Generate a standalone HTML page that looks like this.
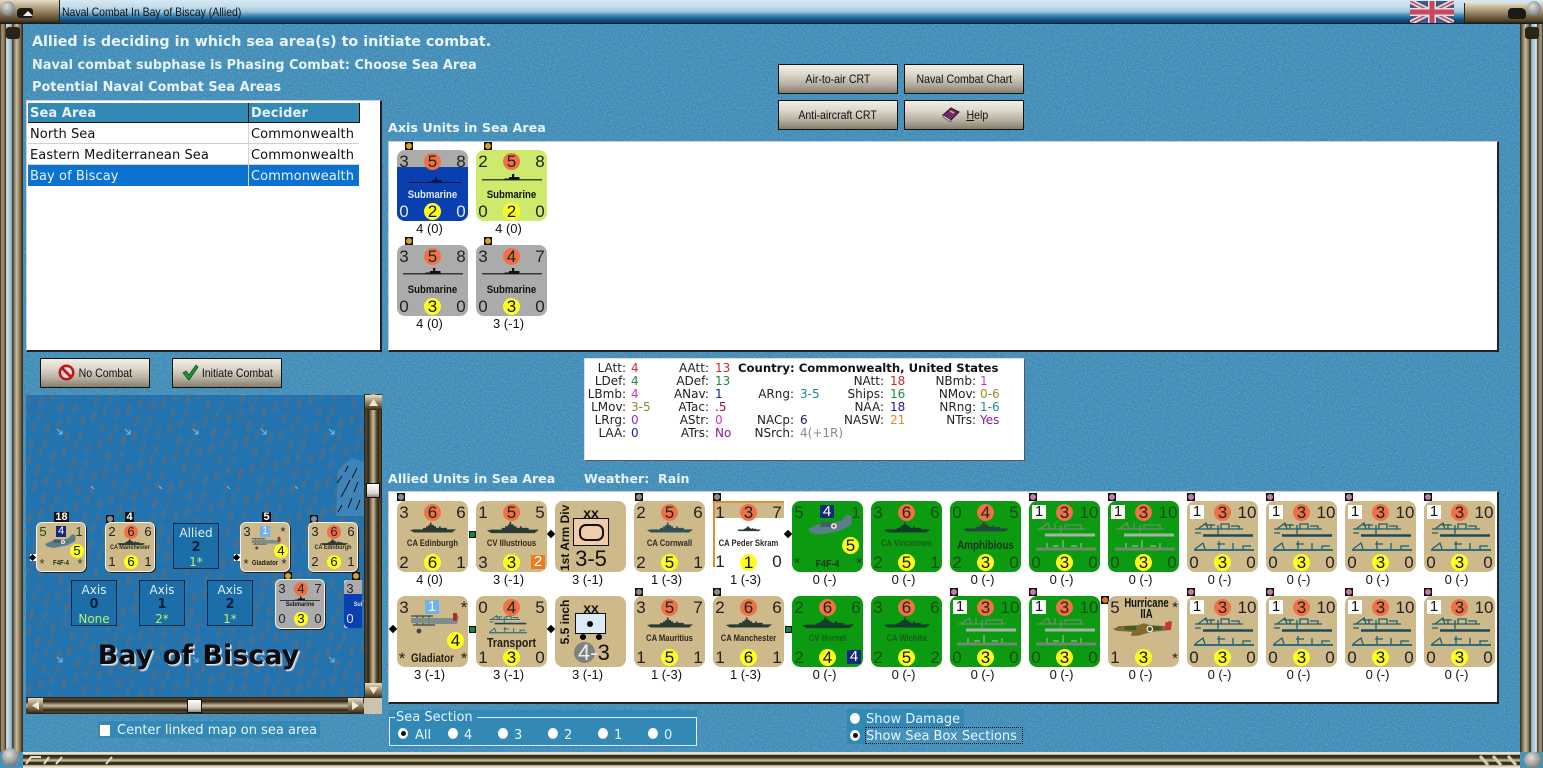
<!DOCTYPE html>
<html><head><meta charset="utf-8"><title>Naval Combat</title>
<style>
html,body{margin:0;padding:0;width:1543px;height:768px;overflow:hidden;background:#3b8ab6;font-family:"Liberation Sans",sans-serif}
#r{position:relative;width:1543px;height:768px;overflow:hidden}
#r div,#r span,#r svg,#r b{position:absolute}
.h{font:bold 13px "DejaVu Sans",sans-serif;color:#e9f3f8;white-space:nowrap}
.v{font:13px "DejaVu Sans",sans-serif;white-space:nowrap;letter-spacing:.08px}
.btn{background:linear-gradient(#f2eee6 0,#dcd6ca 35%,#b5ae9f 70%,#857d6d 100%);border:1px solid #111;box-sizing:border-box;color:#111;text-align:center;font:12px/28px "Liberation Sans",sans-serif;height:30px}
.btn span{position:static!important;display:inline-block;transform:scaleX(.88);white-space:nowrap}
.c{width:71px;height:71px;border-radius:8px;background:#cdb98a;overflow:hidden}
.gr{background:#0b9a10}.gy{background:#ababab}.lg{background:#cdea6c}
.n{width:16px;height:17px;text-align:center;font:17px/17px "Liberation Sans",sans-serif;color:#222}
.gr .n{color:#174d17}
.a{left:-1px;top:3px}.b{left:27px;top:3px;background:#ee7246;border-radius:50%;width:17px;color:#222!important}
.d{left:56px;top:3px}.t{left:50px;width:20px;top:3px}
.e{left:-1px;top:53px}.f{left:27px;top:53px;background:#ffff1e;border-radius:50%;width:17px;color:#111!important}.g{left:56px;top:53px}
.w{background:#fff;left:3px;top:4px;width:14px;height:14px;color:#111!important;font-size:15px;line-height:14px}
.nm{left:0;width:71px;top:36px;text-align:center;font:bold 9px/12px "Liberation Sans",sans-serif;color:#2d2a1e;transform:scaleX(.85);white-space:nowrap}
.gr .nm{color:#195c1a}
.sb{left:0;width:71px;top:39px;text-align:center;font:bold 11px/13px "Liberation Sans",sans-serif;color:#111;transform:scaleX(.87)}
.l{width:71px;margin-left:-3px;text-align:center;font:13px/14px "Liberation Sans",sans-serif;color:#111}
.mk{width:8px;height:8px;background:#111}
.mk i{position:absolute;left:1px;top:1px;width:6px;height:6px;border-radius:50%;background:#8a8a8a}
.pu i{background:#c07aa8}.or i{background:#dc9c30}.br i{background:#d27a2a}
.dm{width:6px;height:6px;background:#000;transform:rotate(45deg)}
.gs{width:7px;height:7px;background:#111}.gs i{position:absolute;left:1px;top:1px;width:5px;height:5px;background:#0d8a3a;border-radius:1px}
.ship{left:13px;top:20px;width:46px;height:13px;fill:#2a3a34}
.gr .ship{fill:#123d2a}
.sub{left:6px;top:20px;width:60px;height:12px;fill:#111}
.tr{left:6px;top:21px;width:62px;height:30px}
.m{width:48px;height:48px;border-radius:5px;background:#cdb98a;overflow:hidden;box-shadow:0 0 0 1px #f4f1e6,1px 1px 0 1px #222}
.m .n{font-size:13px;line-height:14px;height:14px;width:12px}
.m .a{left:0;top:2px}.m .b{left:18px;top:2px;width:14px}.m .d{left:36px;top:2px}
.m .e{left:0;top:32px}.m .f{left:18px;top:32px;width:14px}.m .g{left:36px;top:32px}
.m .nm{width:48px;font-size:6.5px;top:21px;line-height:8px}
.bx{width:46px;height:46px;background:#1b6ea8;border:1px solid #0a2a48;box-sizing:border-box;text-align:center;color:#dfeef6}
.bx b{left:0;width:44px;font:bold 13px/14px "DejaVu Sans",sans-serif;color:#0b1f3e;top:17px}
.bx span{left:0;width:44px;font:12px/14px "DejaVu Sans",sans-serif}
.s1{top:2px}.s2{top:31px;color:#b8f06a}
.rd{width:10px;height:11px;border-radius:50%;background:radial-gradient(circle at 45% 45%,#fff 0,#fff 55%,#c9ccd0 80%,#5c6c78 100%)}
.rd i{position:absolute;left:3px;top:3px;width:5px;height:5px;border-radius:50%;background:#111}
.tx{font:13px "DejaVu Sans",sans-serif;color:#eaf4f9;white-space:nowrap}
.brs{background:linear-gradient(#e6dcc6 0,#bfb091 25%,#857251 60%,#4d3f28 90%,#2b2215 100%)}
.scr{background:radial-gradient(circle at 40% 35%,#dfe0dc,#8f918c 60%,#4e4f4b);border-radius:50%}
.trk{background:linear-gradient(90deg,#1f1a10 0,#5b4c33 12%,#2a2214 24%,#8f7f60 40%,#c9bca0 52%,#7f6f52 64%,#2a2214 78%,#5b4c33 88%,#1f1a10 100%)}
.trkh{background:linear-gradient(#1f1a10 0,#5b4c33 12%,#2a2214 24%,#8f7f60 40%,#c9bca0 52%,#7f6f52 64%,#2a2214 78%,#5b4c33 88%,#1f1a10 100%)}
.hbar{background:linear-gradient(#e8dfc9 0,#e8dfc9 15%,#2e2617 20%,#4a3d27 38%,#b8a988 48%,#c8ba9c 55%,#3b2f1d 65%,#2e2617 78%,#cfc5ae 85%,#f2ede0 100%)}
</style></head><body>
<div id="r">
<svg style="left:0;top:0" width="0" height="0">
<defs>
<symbol id="sh" viewBox="0 0 60 15"><path d="M0 11L5 10H17V8H21V6H24V4H26V1H28V4H31V6H34V8H38V6H40V8H48V10H60L55 14H5Z"/></symbol>
<symbol id="sub" viewBox="0 0 80 14"><path d="M0 10H30V9H36V7H40V3H43V7H50V10H80V11.5H0Z"/></symbol>
<symbol id="trt" viewBox="0 0 62 30"><g fill="none" stroke="#1f5f70" stroke-width="1.3"><path d="M2 7H50M5 7L13 1L15 7M18 7V2M12 3H22M25 3V12M28 7V2H36V7M38 4H46V7M8 11L2 11"/><path stroke="#1d4a58" stroke-width="2.6" d="M10 13.5H60"/><path d="M2 27L10 21L12 27M26 27V19M24 22H32M40 27V21M50 27V24H58"/><path stroke="#2c6e80" stroke-width="2" d="M1 28H61"/></g></symbol>
<symbol id="trg" viewBox="0 0 62 30"><g fill="none" stroke="#6d8c70" stroke-width="1.3"><path d="M2 7H50M5 7L13 1L15 7M20 7V1M26 3V11M30 7V3H46V7"/><path stroke="#a6b4a8" stroke-width="3" d="M10 13H60"/><path stroke="#9cb49c" stroke-width="1.2" d="M28 26V18M12 26V21M46 26V21M18 24H24M36 24H42"/><path stroke="#6e8a72" stroke-width="3" d="M1 27H61"/></g></symbol>
<symbol id="f4f" viewBox="0 0 50 24"><path fill="#5b7e8c" d="M1 15L12 10H24L36 6L42 0L47 2L46 11L34 17L14 21L4 19Z"/><path fill="#3f5d6a" d="M14 8H26L24 13H14Z"/><circle cx="28" cy="12" r="3" fill="#eee"/><circle cx="28" cy="12" r="1.4" fill="#c0304a"/></symbol>
<symbol id="gld" viewBox="0 0 50 26"><g fill="none" stroke="#4e5a52" stroke-width="1.4"><path d="M2 6H24M4 15H26M8 6V15M14 6V15M20 6V15"/></g><path fill="#7c8f86" d="M2 8H28L44 8L46 4L50 6L48 14L28 14L2 13Z"/><path fill="#b32a2a" d="M44 3L48 3L48 11L44 11Z"/><circle cx="10" cy="21" r="2.4" fill="#444"/></symbol>
<symbol id="hur" viewBox="0 0 62 16"><path fill="#806a30" d="M0 8L6 5L26 4L32 2L38 4L54 5L57 0H61L60 9L40 11L26 15H18L20 11L4 10Z"/><path fill="#3e5c2a" d="M12 5H24V9H12ZM40 5H50V9H40Z"/><circle cx="38" cy="8" r="3.4" fill="#eee"/><circle cx="38" cy="8" r="2.2" fill="#3a5f34"/><path fill="#c33" d="M54 1H60V9H54Z"/></symbol>
<pattern id="sea" width="36" height="28" patternUnits="userSpaceOnUse" patternTransform="rotate(-12)">
<rect width="36" height="28" fill="#2273ae"/>
<g fill="#4a6f8c" opacity=".8"><ellipse cx="5" cy="7" rx="2.6" ry="6" transform="rotate(30 5 7)"/><ellipse cx="17" cy="4" rx="2.2" ry="5" transform="rotate(30 17 4)"/><ellipse cx="29" cy="9" rx="2.6" ry="6" transform="rotate(30 29 9)"/><ellipse cx="11" cy="20" rx="2.6" ry="6" transform="rotate(30 11 20)"/><ellipse cx="24" cy="23" rx="2.2" ry="5" transform="rotate(30 24 23)"/></g>
</pattern>
<pattern id="ar" width="68" height="114" patternUnits="userSpaceOnUse" patternTransform="translate(26 375)">
<g stroke="#7fb6d6" stroke-width="1.1" fill="none"><path d="M31 54L36 59M36 55V59H32"/><path d="M-3 111L2 116M65 111L70 116M70 112V116H66"/></g>
</pattern>
<filter id="nz" x="0" y="0" width="100%" height="100%"><feTurbulence type="fractalNoise" baseFrequency=".8" numOctaves="2" seed="4"/><feColorMatrix values="0 0 0 0 .1 0 0 0 0 .3 0 0 0 0 .5 0 0 0 1.1 -.36"/></filter>
<filter id="nz2" x="0" y="0" width="100%" height="100%"><feTurbulence type="fractalNoise" baseFrequency=".7" numOctaves="2" seed="11"/><feColorMatrix values="0 0 0 0 .6 0 0 0 0 .8 0 0 0 0 .9 0 0 0 1.1 -.45"/></filter>
</defs></svg>
<svg style="left:0;top:0" width="1543" height="768"><rect width="1543" height="768" filter="url(#nz)" opacity=".8"/><rect width="1543" height="768" filter="url(#nz2)" opacity=".55"/></svg>

<!-- title -->
<div style="left:0;top:0;width:1543px;height:23px;background:linear-gradient(#d7e9f3 0,#c2ddec 30%,#9cc6dd 50%,#3f86b0 68%,#0f5485 85%,#0a3d66 100%)"></div>
<div style="left:0;top:23px;width:1543px;height:1px;background:#101c28"></div>
<div class="brs" style="left:0;top:0;width:59px;height:23px;border-right:1px solid #222"></div>
<div style="left:17px;top:8px;width:16px;height:10px;background:#1d1a14;border-radius:4px 3px 3px 3px"></div>
<svg style="left:22px;top:9px" width="12" height="8"><path d="M1 7L6 2L11 7Z" fill="#eee"/></svg>
<div class="scr" style="left:1px;top:1px;width:14px;height:15px"></div>
<div style="left:62px;top:5px;font:12px/14px 'Liberation Sans',sans-serif;color:#111;transform:scaleX(.87);transform-origin:left;white-space:nowrap">Naval Combat In Bay of Biscay (Allied)</div>
<svg style="left:1410px;top:1px" width="44" height="22" viewBox="0 0 44 22"><rect width="44" height="22" fill="#3c5a8a"/><path d="M0 0L44 22M44 0L0 22" stroke="#e8dde0" stroke-width="5"/><path d="M0 0L44 22M44 0L0 22" stroke="#c6475f" stroke-width="1.6"/><path d="M22 0V22M0 11H44" stroke="#e8dde0" stroke-width="8"/><path d="M22 0V22M0 11H44" stroke="#c6475f" stroke-width="5"/></svg>
<div class="brs" style="left:1464px;top:3px;width:79px;height:20px;border-left:1px solid #222"></div>
<div style="left:1508px;top:8px;width:18px;height:11px;background:#1d1a14;border-radius:4px 5px 3px 3px"></div>
<div class="scr" style="left:1527px;top:1px;width:14px;height:15px"></div>

<!-- left/right frame -->
<div style="left:0;top:24px;width:23px;height:728px;background:linear-gradient(90deg,#2a2114 0,#a89879 8%,#7f6d4e 20%,#3a2e1c 25%,#d7e6ef 28%,#8fb4cb 50%,#27231a 56%,#7d6d50 60%,#c9bca0 72%,#7f6c4c 88%,#2a2114 100%)"></div>
<div style="left:6px;top:27px;width:14px;height:12px;background:#2a2417;border-radius:3px"></div>
<div style="left:1520px;top:24px;width:23px;height:728px;background:linear-gradient(90deg,#2a2114 0,#7f6c4c 10%,#c9bca0 25%,#7d6d50 38%,#27231a 44%,#8fb4cb 50%,#d7e6ef 72%,#3a2e1c 76%,#7f6d4e 80%,#a89879 92%,#2a2114 100%)"></div>
<div style="left:1525px;top:27px;width:14px;height:12px;background:#2a2417;border-radius:3px"></div>
<!-- bottom -->
<div class="hbar" style="left:23px;top:752px;width:1497px;height:16px"></div>
<svg style="left:23px;top:755px" width="95" height="12"><path d="M3 9L8 2H18M21 9L26 2M33 9L39 2M83 9L89 2" stroke="#e8dfc9" stroke-width="2" fill="none"/></svg>
<svg style="left:1478px;top:755px" width="42" height="12"><path d="M2 1L10 10M15 1L23 10M30 1L38 10" stroke="#d9ccb0" stroke-width="3" fill="none"/></svg>
<div class="scr" style="left:1524px;top:752px;width:18px;height:16px"></div>
<div class="scr" style="left:2px;top:748px;width:17px;height:18px"></div>

<!-- headings -->
<div class="h" style="left:32px;top:34px;font-size:14.27px">Allied is deciding in which sea area(s) to initiate combat.</div>
<div class="h" style="left:32px;top:58px;font-size:12.9px">Naval combat subphase is Phasing Combat: Choose Sea Area</div>
<div class="h" style="left:32px;top:80px;font-size:12.9px">Potential Naval Combat Sea Areas</div>
<div class="h" style="left:388px;top:120px;font-size:12.7px">Axis Units in Sea Area</div>
<div class="h" style="left:388px;top:471px;font-size:12.6px">Allied Units in Sea Area</div>
<div class="h" style="left:584px;top:471px;font-size:12.6px">Weather:&nbsp; Rain</div>

<!-- list -->
<div style="left:26px;top:100px;width:356px;height:252px;background:#fff;box-sizing:border-box;border:1px solid #ccd;border-right:2px solid #222;border-bottom:2px solid #222"></div>
<div style="left:28px;top:103px;width:220px;height:19px;background:#3389b6;border-bottom:1px solid #111"></div>
<div style="left:249px;top:103px;width:110px;height:19px;background:#3389b6;border-bottom:1px solid #111;border-right:1px solid #111"></div>
<div style="left:248px;top:103px;width:1px;height:20px;background:#111"></div>
<div class="v" style="left:30px;top:106px;font-weight:bold;color:#e8f2f8">Sea Area</div>
<div class="v" style="left:251px;top:106px;font-weight:bold;color:#e8f2f8">Decider</div>
<div style="left:28px;top:123px;width:331px;height:21px;border-bottom:1px solid #cfcfcf;box-sizing:border-box"></div>
<div style="left:28px;top:144px;width:331px;height:21px;border-bottom:1px solid #cfcfcf;box-sizing:border-box"></div>
<div style="left:28px;top:165px;width:331px;height:21px;background:#0b73cf"></div>
<div style="left:248px;top:123px;width:1px;height:63px;background:#cfd4d8"></div>
<div class="v" style="left:30px;top:127px;color:#111">North Sea</div><div class="v" style="left:251px;top:127px;color:#111">Commonwealth</div>
<div class="v" style="left:30px;top:148px;color:#111">Eastern Mediterranean Sea</div><div class="v" style="left:251px;top:148px;color:#111">Commonwealth</div>
<div class="v" style="left:30px;top:169px;color:#e6f3ff">Bay of Biscay</div><div class="v" style="left:251px;top:169px;color:#e6f3ff">Commonwealth</div>

<!-- buttons -->
<div class="btn" style="left:778px;top:64px;width:120px"><span>Air-to-air CRT</span></div>
<div class="btn" style="left:904px;top:64px;width:120px"><span>Naval Combat Chart</span></div>
<div class="btn" style="left:778px;top:100px;width:120px"><span>Anti-aircraft CRT</span></div>
<div class="btn" style="left:904px;top:100px;width:120px;padding-left:26px"><span><u>H</u>elp</span></div>
<svg style="left:942px;top:107px" width="18" height="15" viewBox="0 0 18 15"><path d="M1 8L9 1L17 5L9 13Z" fill="#6d2a78" stroke="#2a1230"/><path d="M1 8L9 13V15L1 10Z" fill="#ddd" stroke="#333" stroke-width=".6"/><path d="M8 4L12 6" stroke="#f1c40f" stroke-width="1.4"/></svg>
<div class="btn" style="left:40px;top:358px;width:110px;padding-left:21px"><span>No Combat</span></div>
<svg style="left:58px;top:364px" width="17" height="17" viewBox="0 0 17 17"><circle cx="8.5" cy="8.5" r="6.7" fill="#f5e0e0" stroke="#c01818" stroke-width="2.6"/><path d="M4 4L13 13" stroke="#c01818" stroke-width="2.8"/></svg>
<div class="btn" style="left:172px;top:358px;width:110px;padding-left:21px"><span>Initiate Combat</span></div>
<svg style="left:182px;top:364px" width="17" height="17" viewBox="0 0 17 17"><path d="M1 9L4 7L7 11L14 1L16 3L7 16Z" fill="#1b9a3c" stroke="#0c3a1a" stroke-width=".7"/></svg>

<!-- axis panel -->
<div style="left:388px;top:141px;width:1111px;height:211px;background:#fff;box-sizing:border-box;border:1px solid #ccd;border-right:2px solid #222;border-bottom:2px solid #222"></div>
<div class="mk or" style="left:405px;top:142px"><i></i></div>
<div class="mk or" style="left:484px;top:142px"><i></i></div>
<div class="mk or" style="left:405px;top:237px"><i></i></div>
<div class="mk or" style="left:484px;top:237px"><i></i></div>

<div class="c gy" style="left:397px;top:150px"><div style="left:0;top:17px;width:71px;height:54px;background:#0a3fb0"></div>
<span class="n a">3</span><span class="n b">5</span><span class="n d">8</span>
<svg class="sub" style="fill:#0a1a3a;left:12px;top:25px;width:52px;height:10px"><use href="#sub"/></svg><div class="sb" style="color:#dfe8f5">Submarine</div>
<span class="n e" style="color:#dfe8f5">0</span><span class="n f">2</span><span class="n g" style="color:#dfe8f5">0</span></div>
<div class="l" style="left:397px;top:222px">4 (0)</div>

<div class="c lg" style="left:476px;top:150px"><span class="n a">2</span><span class="n b">5</span><span class="n d">8</span>
<svg class="sub" style="top:21px"><use href="#sub"/></svg><div class="sb">Submarine</div>
<span class="n e">0</span><span class="n f">2</span><span class="n g">0</span></div>
<div class="l" style="left:476px;top:222px">4 (0)</div>

<div class="c gy" style="left:397px;top:245px"><span class="n a">3</span><span class="n b">5</span><span class="n d">8</span>
<svg class="sub"><use href="#sub"/></svg><div class="sb">Submarine</div>
<span class="n e">0</span><span class="n f">3</span><span class="n g">0</span></div>
<div class="l" style="left:397px;top:317px">4 (0)</div>

<div class="c gy" style="left:476px;top:245px"><span class="n a">3</span><span class="n b">4</span><span class="n d">7</span>
<svg class="sub"><use href="#sub"/></svg><div class="sb">Submarine</div>
<span class="n e">0</span><span class="n f">3</span><span class="n g">0</span></div>
<div class="l" style="left:476px;top:317px">3 (-1)</div>

<!-- info box -->
<div style="left:584px;top:358px;width:441px;height:103px;background:#fff;box-sizing:border-box;border:1px solid #ddd;border-right:1px solid #556;border-bottom:1px solid #556"></div>
<div style="left:586px;top:362px;width:400px;height:90px;font:12px/13px 'DejaVu Sans',sans-serif;color:#222">
<span style="right:360px;top:0">LAtt:</span><span style="left:45px;top:0;color:#d0282c">4</span>
<span style="right:360px;top:13px">LDef:</span><span style="left:45px;top:13px;color:#1d8a3a">4</span>
<span style="right:360px;top:26px">LBmb:</span><span style="left:45px;top:26px;color:#d232d2">4</span>
<span style="right:360px;top:39px">LMov:</span><span style="left:45px;top:39px;color:#8a8a22">3-5</span>
<span style="right:360px;top:52px">LRrg:</span><span style="left:45px;top:52px;color:#9c2ad0">0</span>
<span style="right:360px;top:65px">LAA:</span><span style="left:45px;top:65px;color:#1a1a9a">0</span>
<span style="right:277px;top:0">AAtt:</span><span style="left:129px;top:0;color:#d0282c">13</span>
<span style="right:277px;top:13px">ADef:</span><span style="left:129px;top:13px;color:#1d8a3a">13</span>
<span style="right:277px;top:26px">ANav:</span><span style="left:129px;top:26px;color:#1a1a9a">1</span>
<span style="right:277px;top:39px">ATac:</span><span style="left:129px;top:39px;color:#7a1a2a">.5</span>
<span style="right:277px;top:52px">AStr:</span><span style="left:129px;top:52px;color:#d232d2">0</span>
<span style="right:277px;top:65px">ATrs:</span><span style="left:129px;top:65px;color:#8a1a9a">No</span>
<span style="right:192px;top:26px">ARng:</span><span style="left:214px;top:26px;color:#1a8a9a">3-5</span>
<span style="right:192px;top:52px">NACp:</span><span style="left:214px;top:52px;color:#1a1a7a">6</span>
<span style="right:192px;top:65px">NSrch:</span><span style="left:214px;top:65px;color:#8a8a8a">4(+1R)</span>
<span style="right:102px;top:13px">NAtt:</span><span style="left:304px;top:13px;color:#d0282c">18</span>
<span style="right:102px;top:26px">Ships:</span><span style="left:304px;top:26px;color:#1d8a3a">16</span>
<span style="right:102px;top:39px">NAA:</span><span style="left:304px;top:39px;color:#1a1a9a">18</span>
<span style="right:102px;top:52px">NASW:</span><span style="left:304px;top:52px;color:#d8902a">21</span>
<span style="right:10px;top:13px;width:60px;text-align:right">NBmb:</span><span style="left:394px;top:13px;color:#d232d2">1</span>
<span style="right:10px;top:26px;width:60px;text-align:right">NMov:</span><span style="left:394px;top:26px;color:#9a8a22;white-space:nowrap">0-6</span>
<span style="right:10px;top:39px;width:60px;text-align:right">NRng:</span><span style="left:394px;top:39px;color:#1a8a9a;white-space:nowrap">1-6</span>
<span style="right:10px;top:52px;width:60px;text-align:right">NTrs:</span><span style="left:394px;top:52px;color:#8a1a9a;white-space:nowrap">Yes</span>
<b style="left:152px;top:0;font-size:11.65px;color:#111;white-space:nowrap">Country: Commonwealth, United States</b>
</div>

<!-- allied panel -->
<div style="left:388px;top:491px;width:1111px;height:213px;background:#fff;box-sizing:border-box;border:1px solid #ccd;border-right:2px solid #222;border-bottom:2px solid #222"></div>
<div class="mk" style="left:397px;top:493px"><i></i></div><div class="mk" style="left:635px;top:493px"><i></i></div><div class="mk" style="left:713px;top:493px"><i></i></div>
<div class="mk" style="left:635px;top:588px"><i></i></div><div class="mk" style="left:713px;top:588px"><i></i></div>
<div class="mk pu" style="left:1029px;top:493px"><i></i></div><div class="mk pu" style="left:1108px;top:493px"><i></i></div><div class="mk pu" style="left:1187px;top:493px"><i></i></div><div class="mk pu" style="left:1266px;top:493px"><i></i></div><div class="mk pu" style="left:1345px;top:493px"><i></i></div><div class="mk pu" style="left:1424px;top:493px"><i></i></div>
<div class="mk pu" style="left:950px;top:588px"><i></i></div><div class="mk pu" style="left:1029px;top:588px"><i></i></div><div class="mk br" style="left:1101px;top:596px"><i></i></div><div class="mk pu" style="left:1187px;top:588px"><i></i></div><div class="mk pu" style="left:1266px;top:588px"><i></i></div><div class="mk pu" style="left:1345px;top:588px"><i></i></div><div class="mk pu" style="left:1424px;top:588px"><i></i></div>
<div class="gs" style="left:469px;top:531px"><i></i></div><div class="dm" style="left:548px;top:531px"></div><div class="dm" style="left:785px;top:531px"></div>
<div class="dm" style="left:390px;top:626px"></div><div class="gs" style="left:469px;top:626px"><i></i></div><div class="dm" style="left:548px;top:626px"></div><div class="gs" style="left:785px;top:626px"><i></i></div>

<!-- row 1 -->
<div class="c" style="left:397px;top:501px"><span class="n a">3</span><span class="n b">6</span><span class="n d">6</span><svg class="ship"><use href="#sh"/></svg><div class="nm">CA Edinburgh</div><span class="n e">2</span><span class="n f">6</span><span class="n g">1</span></div>
<div class="l" style="left:397px;top:573px">4 (0)</div>
<div class="c" style="left:476px;top:501px"><span class="n a">1</span><span class="n b">5</span><span class="n d">5</span><svg class="ship" style="left:10px;width:54px"><use href="#sh"/></svg><div class="nm">CV Illustrious</div><span class="n e">3</span><span class="n f">3</span><span class="n g" style="background:#ee7a1e;color:#fff;left:55px;top:54px;width:14px;height:14px;line-height:14px;font-size:15px">2</span></div>
<div class="l" style="left:476px;top:573px">3 (-1)</div>
<div class="c" style="left:555px;top:501px"><div style="left:18px;top:17px;width:36px;height:28px;background:#f0cda8;border:1px solid #111;box-sizing:border-box"></div><div style="left:24px;top:23px;width:25px;height:17px;border:2px solid #111;border-radius:7px;box-sizing:border-box"></div>
<div style="left:21px;top:5px;width:30px;text-align:center;font:bold 14px/14px 'Liberation Sans',sans-serif;color:#111">xx</div>
<div style="left:16px;top:46px;width:40px;text-align:center;font:22px/24px 'Liberation Sans',sans-serif;color:#111">3-5</div>
<div style="left:-22px;top:31px;width:64px;text-align:center;font:bold 12px/14px 'Liberation Sans',sans-serif;color:#111;transform:rotate(-90deg);white-space:nowrap">1st Arm Div</div></div>
<div class="l" style="left:555px;top:573px">3 (-1)</div>
<div class="c" style="left:634px;top:501px"><span class="n a">2</span><span class="n b">5</span><span class="n d">6</span><svg class="ship" style="fill:#32505a"><use href="#sh"/></svg><div class="nm">CA Cornwall</div><span class="n e">2</span><span class="n f">5</span><span class="n g">1</span></div>
<div class="l" style="left:634px;top:573px">1 (-3)</div>
<div class="c" style="left:713px;top:501px;border-radius:0;background:#fff;height:66px;overflow:visible"><div style="left:0;top:0;width:71px;height:17px;background:#cdb98a"></div><div style="left:0;top:0;width:71px;height:2px;background:#d8903a"></div><div style="left:0;top:0;width:2px;height:66px;background:#d8903a"></div><span class="n a">1</span><span class="n b">3</span><span class="n d">7</span><svg class="ship" style="left:24px;width:24px;top:23px;height:9px"><use href="#sh"/></svg><div class="nm">CA Peder Skram</div><span class="n e" style="top:52px">1</span><span class="n f">1</span><span class="n g" style="top:52px">0</span></div>
<div class="l" style="left:713px;top:573px">1 (-3)</div>
<div class="c gr" style="left:792px;top:501px"><span class="n a">5</span><span class="n" style="left:28px;top:4px;width:14px;height:13px;background:#102a7a;color:#fff;line-height:13px;font-size:15px">4</span><span class="n d">1</span><svg style="left:15px;top:13px;width:48px;height:24px"><use href="#f4f"/></svg><span class="n f" style="left:50px;top:36px">5</span><span class="n" style="left:-3px;top:54px">*</span><span class="n g" style="left:59px;top:54px">*</span><div class="nm" style="top:57px;font-size:10.5px;color:#15351a">F4F-4</div></div>
<div class="l" style="left:792px;top:573px">0 (-)</div>
<div class="c gr" style="left:871px;top:501px"><span class="n a">3</span><span class="n b">6</span><span class="n d">6</span><svg class="ship"><use href="#sh"/></svg><div class="nm">CA Vincennes</div><span class="n e">2</span><span class="n f">5</span><span class="n g">1</span></div>
<div class="l" style="left:871px;top:573px">0 (-)</div>
<div class="c gr" style="left:950px;top:501px"><span class="n a">0</span><span class="n b">4</span><span class="n d">5</span><svg class="ship" style="top:19px;fill:#23493a"><use href="#sh"/></svg><div class="nm" style="top:39px;font-size:11.5px;color:#15351a">Amphibious</div><span class="n e">2</span><span class="n f">3</span><span class="n g">0</span></div>
<div class="l" style="left:950px;top:573px">0 (-)</div>
<div class="c gr" style="left:1029px;top:501px"><span class="n w">1</span><span class="n b">3</span><span class="n t">10</span><svg class="tr"><use href="#trg"/></svg><span class="n e">0</span><span class="n f">3</span><span class="n g">0</span></div>
<div class="l" style="left:1029px;top:573px">0 (-)</div>
<div class="c gr" style="left:1108px;top:501px"><span class="n w">1</span><span class="n b">3</span><span class="n t">10</span><svg class="tr"><use href="#trg"/></svg><span class="n e">0</span><span class="n f">3</span><span class="n g">0</span></div>
<div class="l" style="left:1108px;top:573px">0 (-)</div>
<div class="c" style="left:1187px;top:501px"><span class="n w">1</span><span class="n b">3</span><span class="n t">10</span><svg class="tr"><use href="#trt"/></svg><span class="n e">0</span><span class="n f">3</span><span class="n g">0</span></div>
<div class="l" style="left:1187px;top:573px">0 (-)</div>
<div class="c" style="left:1266px;top:501px"><span class="n w">1</span><span class="n b">3</span><span class="n t">10</span><svg class="tr"><use href="#trt"/></svg><span class="n e">0</span><span class="n f">3</span><span class="n g">0</span></div>
<div class="l" style="left:1266px;top:573px">0 (-)</div>
<div class="c" style="left:1345px;top:501px"><span class="n w">1</span><span class="n b">3</span><span class="n t">10</span><svg class="tr"><use href="#trt"/></svg><span class="n e">0</span><span class="n f">3</span><span class="n g">0</span></div>
<div class="l" style="left:1345px;top:573px">0 (-)</div>
<div class="c" style="left:1424px;top:501px"><span class="n w">1</span><span class="n b">3</span><span class="n t">10</span><svg class="tr"><use href="#trt"/></svg><span class="n e">0</span><span class="n f">3</span><span class="n g">0</span></div>
<div class="l" style="left:1424px;top:573px">0 (-)</div>

<!-- row 2 -->
<div class="c" style="left:397px;top:596px"><span class="n a">3</span><span class="n" style="left:28px;top:4px;width:14px;height:14px;background:#6fb2e8;color:#eaf4fc;line-height:14px;font-size:15px">1</span><span class="n d" style="left:59px">*</span><svg style="left:12px;top:14px;width:50px;height:26px"><use href="#gld"/></svg><span class="n f" style="left:50px;top:36px">4</span><span class="n" style="left:-3px;top:54px">*</span><span class="n g" style="left:59px;top:54px">*</span><div class="nm" style="top:57px;font-size:11.5px;color:#221f14">Gladiator</div></div>
<div class="l" style="left:397px;top:668px">3 (-1)</div>
<div class="c" style="left:476px;top:596px"><span class="n a">0</span><span class="n b">4</span><span class="n d">5</span><svg class="tr" style="left:4px;top:19px;width:56px;height:19px"><use href="#trt"/></svg><div class="nm" style="top:41px;font-size:12.5px;color:#221f14">Transport</div><span class="n e">1</span><span class="n f">3</span><span class="n g">0</span></div>
<div class="l" style="left:476px;top:668px">3 (-1)</div>
<div class="c" style="left:555px;top:596px"><div style="left:20px;top:17px;width:31px;height:21px;background:#dce9f6;border:1px solid #111;box-sizing:border-box"></div><div style="left:32px;top:25px;width:6px;height:6px;background:#000;border-radius:50%"></div><div style="left:25px;top:38px;width:6px;height:6px;background:#000;border-radius:50%"></div><div style="left:41px;top:38px;width:6px;height:6px;background:#000;border-radius:50%"></div>
<div style="left:21px;top:5px;width:30px;text-align:center;font:bold 14px/14px 'Liberation Sans',sans-serif;color:#111">xx</div>
<div style="left:19px;top:46px;width:21px;height:21px;border-radius:50%;background:#808080"></div>
<div style="left:23px;top:45px;width:40px;text-align:left;font:22px/24px 'Liberation Sans',sans-serif;color:#111;white-space:nowrap"><span style="position:static!important;color:#eee">4-</span>3</div>
<div style="left:-22px;top:19px;width:64px;text-align:center;font:bold 12px/14px 'Liberation Sans',sans-serif;color:#111;transform:rotate(-90deg);white-space:nowrap">5.5 inch</div></div>
<div class="l" style="left:555px;top:668px">3 (-1)</div>
<div class="c" style="left:634px;top:596px"><span class="n a">3</span><span class="n b">5</span><span class="n d">7</span><svg class="ship"><use href="#sh"/></svg><div class="nm">CA Mauritius</div><span class="n e">1</span><span class="n f">5</span><span class="n g">1</span></div>
<div class="l" style="left:634px;top:668px">1 (-3)</div>
<div class="c" style="left:713px;top:596px"><span class="n a">2</span><span class="n b">6</span><span class="n d">6</span><svg class="ship"><use href="#sh"/></svg><div class="nm">CA Manchester</div><span class="n e">1</span><span class="n f">6</span><span class="n g">1</span></div>
<div class="l" style="left:713px;top:668px">1 (-3)</div>
<div class="c gr" style="left:792px;top:596px"><span class="n a">2</span><span class="n b">6</span><span class="n d">6</span><svg class="ship" style="left:8px;width:56px"><use href="#sh"/></svg><div class="nm">CV Hornet</div><span class="n e">2</span><span class="n f">4</span><span class="n g" style="background:#102a7a;color:#fff;left:55px;top:54px;width:14px;height:14px;line-height:14px;font-size:15px">4</span></div>
<div class="l" style="left:792px;top:668px">0 (-)</div>
<div class="c gr" style="left:871px;top:596px"><span class="n a">3</span><span class="n b">6</span><span class="n d">6</span><svg class="ship"><use href="#sh"/></svg><div class="nm">CA Wichita</div><span class="n e">2</span><span class="n f">5</span><span class="n g">2</span></div>
<div class="l" style="left:871px;top:668px">0 (-)</div>
<div class="c gr" style="left:950px;top:596px"><span class="n w">1</span><span class="n b">3</span><span class="n t">10</span><svg class="tr"><use href="#trg"/></svg><span class="n e">0</span><span class="n f">3</span><span class="n g">0</span></div>
<div class="l" style="left:950px;top:668px">0 (-)</div>
<div class="c gr" style="left:1029px;top:596px"><span class="n w">1</span><span class="n b">3</span><span class="n t">10</span><svg class="tr"><use href="#trg"/></svg><span class="n e">0</span><span class="n f">3</span><span class="n g">0</span></div>
<div class="l" style="left:1029px;top:668px">0 (-)</div>
<div class="c" style="left:1108px;top:596px"><span class="n a">5</span><span class="n d" style="left:59px;font-size:15px">*</span><div class="nm" style="top:2px;left:3px;font-size:12.5px;line-height:11px;transform:scaleX(.76);color:#111">Hurricane<br>IIA</div><svg style="left:5px;top:25px;width:60px;height:16px"><use href="#hur"/></svg><span class="n e">1</span><span class="n f">3</span><span class="n g" style="left:59px;top:54px;font-size:15px">*</span></div>
<div class="l" style="left:1108px;top:668px">0 (-)</div>
<div class="c" style="left:1187px;top:596px"><span class="n w">1</span><span class="n b">3</span><span class="n t">10</span><svg class="tr"><use href="#trt"/></svg><span class="n e">0</span><span class="n f">3</span><span class="n g">0</span></div>
<div class="l" style="left:1187px;top:668px">0 (-)</div>
<div class="c" style="left:1266px;top:596px"><span class="n w">1</span><span class="n b">3</span><span class="n t">10</span><svg class="tr"><use href="#trt"/></svg><span class="n e">0</span><span class="n f">3</span><span class="n g">0</span></div>
<div class="l" style="left:1266px;top:668px">0 (-)</div>
<div class="c" style="left:1345px;top:596px"><span class="n w">1</span><span class="n b">3</span><span class="n t">10</span><svg class="tr"><use href="#trt"/></svg><span class="n e">0</span><span class="n f">3</span><span class="n g">0</span></div>
<div class="l" style="left:1345px;top:668px">0 (-)</div>
<div class="c" style="left:1424px;top:596px"><span class="n w">1</span><span class="n b">3</span><span class="n t">10</span><svg class="tr"><use href="#trt"/></svg><span class="n e">0</span><span class="n f">3</span><span class="n g">0</span></div>
<div class="l" style="left:1424px;top:668px">0 (-)</div>

<!-- map -->
<div style="left:26px;top:395px;width:339px;height:303px;overflow:hidden" id="mp">
<svg style="left:-26px;top:-395px" width="400" height="720"><rect x="0" y="0" width="400" height="720" fill="url(#sea)"/><rect x="26" y="395" width="340" height="303" fill="url(#ar)"/>
<path d="M336 516L338 470L352 458L364 462V516Z" fill="#4e8fc0" opacity=".6"/>
<path d="M337 483L342 476M345 490L350 480M352 478L357 468M341 497L346 488M354 492L358 482M338 512L342 505M348 508L352 498M356 510L360 500M345 472L348 466" stroke="#112" stroke-width="1" fill="none"/></svg>
</div>
<div style="left:54px;top:512px;width:15px;height:11px;background:#111;color:#fff;font:bold 11px/11px 'Liberation Sans',sans-serif;text-align:center">18</div>
<div style="left:125px;top:512px;width:9px;height:11px;background:#111;color:#fff;font:bold 11px/11px 'Liberation Sans',sans-serif;text-align:center">4</div>
<div style="left:262px;top:512px;width:9px;height:11px;background:#111;color:#fff;font:bold 11px/11px 'Liberation Sans',sans-serif;text-align:center">5</div>
<div class="mk" style="left:106px;top:515px"><i></i></div><div class="mk" style="left:310px;top:515px"><i></i></div>
<div class="m gr" style="left:37px;top:523px"><span class="n a">5</span><span class="n" style="left:19px;top:3px;width:10px;height:11px;line-height:11px;background:#102a7a;color:#fff;font-size:11px">4</span><span class="n d">1</span><svg style="left:7px;top:11px;width:34px;height:16px"><use href="#f4f"/></svg><span class="n f" style="left:33px;top:21px">5</span><span class="n" style="left:-1px;top:34px">*</span><span class="n g" style="left:37px;top:34px">*</span><div class="nm" style="top:37px;font-size:7px;color:#15351a">F4F-4</div></div>
<div class="m" style="left:106px;top:523px"><span class="n a">2</span><span class="n b">6</span><span class="n d">6</span><svg class="ship" style="left:11px;top:15px;width:28px;height:8px"><use href="#sh"/></svg><div class="nm">CA Manchester</div><span class="n e">1</span><span class="n f">6</span><span class="n g">1</span></div>
<div class="bx" style="left:173px;top:523px"><span class="s1">Allied</span><b>2</b><span class="s2">1*</span></div>
<div class="m" style="left:241px;top:523px"><span class="n a">3</span><span class="n" style="left:19px;top:3px;width:10px;height:11px;line-height:11px;background:#6fb2e8;color:#eaf4fc;font-size:11px">1</span><span class="n d">*</span><svg style="left:8px;top:12px;width:34px;height:16px"><use href="#gld"/></svg><span class="n f" style="left:33px;top:21px">4</span><span class="n" style="left:-1px;top:34px">*</span><span class="n g" style="left:37px;top:34px">*</span><div class="nm" style="top:37px;font-size:7px;color:#221f14">Gladiator</div></div>
<div class="m" style="left:309px;top:523px"><span class="n a">3</span><span class="n b">6</span><span class="n d">6</span><svg class="ship" style="left:11px;top:15px;width:28px;height:8px"><use href="#sh"/></svg><div class="nm">CA Edinburgh</div><span class="n e">2</span><span class="n f">6</span><span class="n g">1</span></div>
<div style="left:30px;top:554px;width:7px;height:7px;background:#fff"></div><div class="dm" style="left:30px;top:555px;width:5px;height:5px"></div>
<div style="left:234px;top:554px;width:7px;height:7px;background:#fff"></div><div class="dm" style="left:234px;top:555px;width:5px;height:5px"></div>
<div class="mk or" style="left:284px;top:572px"><i></i></div><div class="mk or" style="left:352px;top:572px"><i></i></div>
<div class="bx" style="left:71px;top:580px"><span class="s1">Axis</span><b>0</b><span class="s2">None</span></div>
<div class="bx" style="left:139px;top:580px"><span class="s1">Axis</span><b>1</b><span class="s2">2*</span></div>
<div class="bx" style="left:207px;top:580px"><span class="s1">Axis</span><b>2</b><span class="s2">1*</span></div>
<div class="m gy" style="left:276px;top:580px;background:#ababab"><span class="n a">3</span><span class="n b">4</span><span class="n d">7</span><svg class="ship" style="left:4px;top:15px;width:40px;height:7px;fill:#111"><use href="#sub"/></svg><div class="nm" style="color:#111">Submarine</div><span class="n e">0</span><span class="n f">3</span><span class="n g">0</span></div>
<div style="left:344px;top:580px;width:18px;height:48px;overflow:hidden"><div class="m" style="left:0;top:0;background:#0a3fb0"><div style="left:0;top:0;width:48px;height:14px;background:#ababab"></div><span class="n a">3</span><span class="n b">5</span><div class="nm" style="color:#dfe8f5">Submarine</div><span class="n e" style="color:#dfe8f5">0</span><span class="n f">2</span></div></div>
<div style="left:26px;top:638px;width:345px;text-align:center;font:bold 27px/36px 'DejaVu Sans',sans-serif;color:#0b0b12;text-shadow:1px 1px 0 #dfe8ee,2px 2px 0 #9fb8c8;white-space:nowrap">Bay of Biscay</div>

<!-- scrollbars -->
<div class="trk" style="left:364px;top:394px;width:18px;height:320px"></div>
<div class="brs" style="left:365px;top:395px;width:17px;height:15px"></div>
<svg style="left:368px;top:398px" width="11" height="9"><path d="M1 8L5.5 1L10 8Z" fill="#efe8d6"/></svg>
<div style="left:366px;top:483px;width:14px;height:15px;background:linear-gradient(#fff,#d9d6cc 70%,#888);border:1px solid #111;box-sizing:border-box"></div>
<div class="brs" style="left:365px;top:683px;width:17px;height:15px"></div>
<svg style="left:368px;top:686px" width="11" height="9"><path d="M1 1L5.5 8L10 1Z" fill="#efe8d6"/></svg>
<div class="trkh" style="left:26px;top:697px;width:338px;height:17px"></div>
<div class="brs" style="left:28px;top:698px;width:15px;height:15px"></div>
<svg style="left:31px;top:700px" width="9" height="11"><path d="M8 1L1 5.5L8 10Z" fill="#efe8d6"/></svg>
<div class="brs" style="left:348px;top:698px;width:15px;height:15px"></div>
<svg style="left:351px;top:700px" width="9" height="11"><path d="M1 1L8 5.5L1 10Z" fill="#efe8d6"/></svg>
<div style="left:187px;top:699px;width:15px;height:14px;background:linear-gradient(#fff,#d9d6cc 70%,#888);border:1px solid #111;box-sizing:border-box"></div>
<div style="left:364px;top:698px;width:18px;height:16px;background:#cbc3ae"></div>

<!-- bottom controls -->
<div style="left:98px;top:721px;width:222px;height:17px;background:#3389b6"></div>
<div style="left:99px;top:724px;width:11px;height:12px;background:#fff;border-left:1px solid #6b7a85;border-top:1px solid #6b7a85;box-sizing:border-box"></div>
<div class="tx" style="left:117px;top:723px">Center linked map on sea area</div>

<div style="left:389px;top:710px;width:308px;height:37px;background:#3389b6"></div>
<div style="left:389px;top:717px;width:308px;height:29px;box-sizing:border-box;border:1px solid #e9eef2"></div>
<div style="left:395px;top:710px;width:82px;height:14px;background:#3389b6"></div>
<div class="tx" style="left:396px;top:710px">Sea Section</div>
<div class="rd" style="left:398px;top:728px"><i></i></div><div class="tx" style="left:415px;top:728px">All</div>
<div class="rd" style="left:448px;top:728px"></div><div class="tx" style="left:464px;top:728px">4</div>
<div class="rd" style="left:498px;top:728px"></div><div class="tx" style="left:514px;top:728px">3</div>
<div class="rd" style="left:548px;top:728px"></div><div class="tx" style="left:564px;top:728px">2</div>
<div class="rd" style="left:598px;top:728px"></div><div class="tx" style="left:614px;top:728px">1</div>
<div class="rd" style="left:648px;top:728px"></div><div class="tx" style="left:664px;top:728px">0</div>

<div style="left:847px;top:709px;width:117px;height:18px;background:#3389b6"></div>
<div style="left:847px;top:727px;width:19px;height:17px;background:#3389b6"></div>
<div class="rd" style="left:850px;top:713px"></div><div class="tx" style="left:866px;top:712px">Show Damage</div>
<div class="rd" style="left:850px;top:730px"><i></i></div><div class="tx" style="left:866px;top:729px">Show Sea Box Sections</div>
<div style="left:865px;top:727px;width:158px;height:17px;box-sizing:border-box;border:1px dotted #111"></div>
</div>
</body></html>
